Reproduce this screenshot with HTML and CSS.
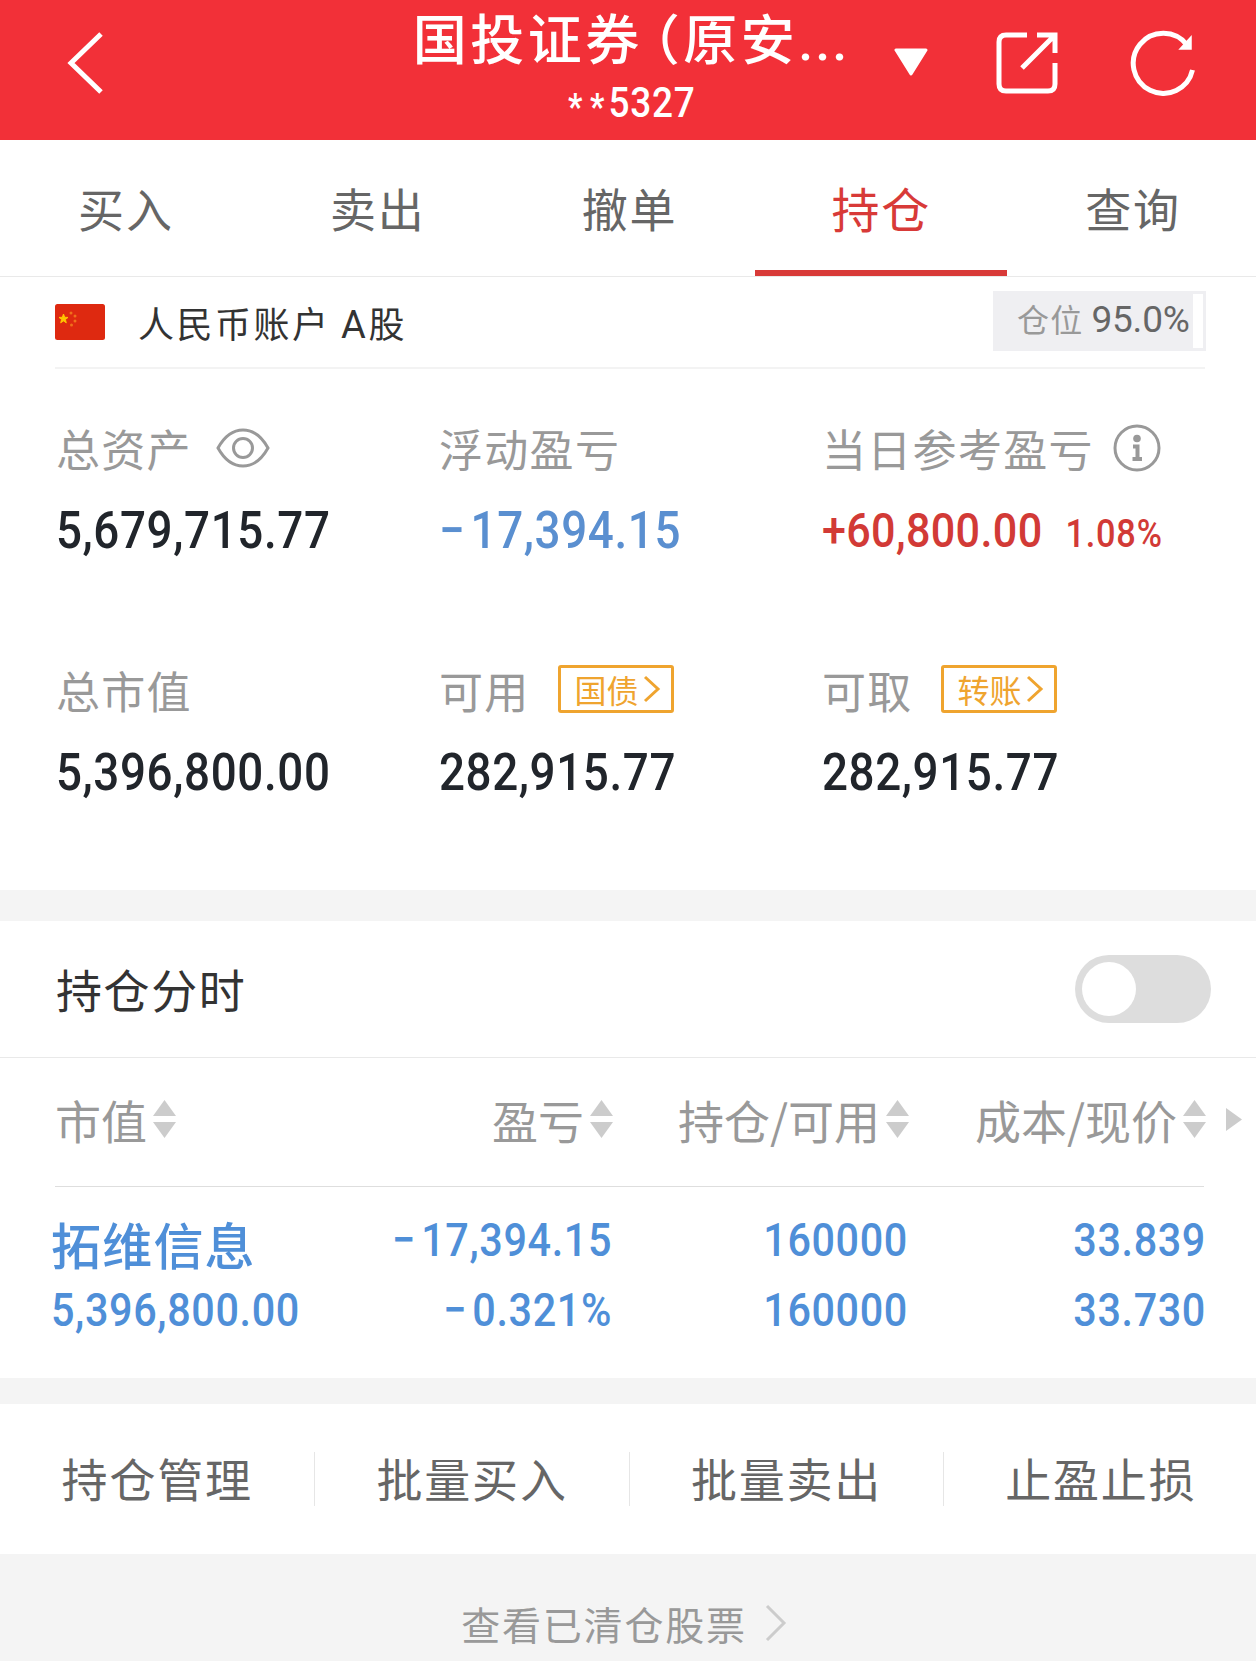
FILE: index.html
```html
<!DOCTYPE html>
<html lang="zh-CN">
<head>
  <meta charset="UTF-8" />
  <meta name="viewport" content="width=device-width, initial-scale=1.0" />
  <title>持仓</title>
  <link rel="stylesheet" href="styles.css">
</head>
<body>

  <header class="header">
    <svg class="back" width="40" height="68" viewBox="0 0 40 68"><path d="M37 5 L7 34 L37 63" fill="none" stroke="#fff" stroke-width="5"/></svg>
    <div class="broker">
      <div class="broker-name">国投证券<span class="paren">（</span>原安<span class="dots">...</span></div>
      <div class="broker-no"><span class="star">*</span><span class="star">*</span>5327</div>
    </div>
    <svg class="caret" width="34" height="28" viewBox="0 0 34 28"><path d="M2 2 H32 L17 26 Z" fill="#fff" stroke="#fff" stroke-width="3" stroke-linejoin="round"/></svg>
    <svg class="share" width="62" height="62" viewBox="0 0 62 62" fill="none" stroke="#fff" stroke-width="5">
      <path d="M31 3 H10 Q3 3 3 10 V52 Q3 59 10 59 H52 Q59 59 59 52 V31"/>
      <path d="M41 3 H59 V21 M59 3 L26 36"/>
    </svg>
    <svg class="refresh" width="66" height="66" viewBox="0 0 66 66">
      <path d="M62.500 40 A30 30 0 1 1 57 15" fill="none" stroke="#fff" stroke-width="5"/>
      <path d="M61 7 V19 H50 Z" fill="#fff" stroke="#fff" stroke-width="1.500"/>
    </svg>
  </header>

  <nav class="tabs">
    <div class="tab">买入</div>
    <div class="tab">卖出</div>
    <div class="tab">撤单</div>
    <div class="tab active">持仓</div>
    <div class="tab">查询</div>
  </nav>

  <section class="account">
    <div class="account-bar">
      <svg class="flag" width="50" height="36" viewBox="0 0 50 36">
        <rect width="50" height="36" rx="2.500" fill="#de2910"/>
        <path d="M8.500 10 L9.700 13.300 L13 13.400 L10.400 15.500 L11.300 18.800 L8.500 16.900 L5.700 18.800 L6.600 15.500 L4 13.400 L7.300 13.300 Z" fill="#ffc400" stroke="#ffc400"/>
        <g fill="#f0701c"><circle cx="16" cy="9" r="1.500"/><circle cx="20" cy="12" r="1.500"/><circle cx="20" cy="17" r="1.500"/><circle cx="16.500" cy="21" r="1.500"/></g>
      </svg>
      <div class="account-name">人民币账户 <span class="latin">A</span>股</div>
      <div class="position"><div class="position-fill">仓位<span class="percent-full">95.0%</span></div></div>
    </div>

    <div class="metrics">
      <div class="metric">
        <div class="label">总资产
          <svg class="eye" width="54" height="40" viewBox="0 0 54 40" fill="none" stroke="#999" stroke-width="3"><path d="M2 20 Q12 2 27 2 Q42 2 52 20 Q42 38 27 38 Q12 38 2 20 Z"/><circle cx="27" cy="20" r="9.500"/></svg>
        </div>
        <div class="value num">5,679,715.77</div>
      </div>
      <div class="metric">
        <div class="label">浮动盈亏</div>
        <div class="value num blue"><span class="minus">−</span>17,394.15</div>
      </div>
      <div class="metric">
        <div class="label">当日参考盈亏
          <svg class="info" width="48" height="48" viewBox="0 0 48 48"><circle cx="24" cy="24" r="22" fill="none" stroke="#999" stroke-width="3"/><circle cx="24" cy="14.500" r="3.800" fill="#999"/><path d="M20 22.500 H24.500 V36 M19.500 35 H29" fill="none" stroke="#999" stroke-width="4"/></svg>
        </div>
        <div class="value num red">+60,800.00<span class="percent">1.08%</span></div>
      </div>
      <div class="metric">
        <div class="label">总市值</div>
        <div class="value num">5,396,800.00</div>
      </div>
      <div class="metric">
        <div class="label">可用
          <span class="tag">国债<svg width="18" height="28" viewBox="0 0 18 28"><path d="M2 2 L15 14 L2 26" fill="none" stroke="#efa42f" stroke-width="3"/></svg></span>
        </div>
        <div class="value num">282,915.77</div>
      </div>
      <div class="metric">
        <div class="label">可取
          <span class="tag">转账<svg width="18" height="28" viewBox="0 0 18 28"><path d="M2 2 L15 14 L2 26" fill="none" stroke="#efa42f" stroke-width="3"/></svg></span>
        </div>
        <div class="value num">282,915.77</div>
      </div>
    </div>
  </section>

  <section class="chart-switch">
    <div class="switch-title">持仓分时</div>
    <div class="switch"><div class="knob"></div></div>
  </section>

  <section class="holdings">
    <div class="row head">
      <div class="cell">市值<svg class="sort" width="23" height="38" viewBox="0 0 23 38"><path d="M11.500 0 L23 16 H0 Z M0 22 H23 L11.500 38 Z" fill="#ccc"/></svg></div>
      <div class="cell">盈亏<svg class="sort" width="23" height="38" viewBox="0 0 23 38"><path d="M11.500 0 L23 16 H0 Z M0 22 H23 L11.500 38 Z" fill="#ccc"/></svg></div>
      <div class="cell">持仓/可用<svg class="sort" width="23" height="38" viewBox="0 0 23 38"><path d="M11.500 0 L23 16 H0 Z M0 22 H23 L11.500 38 Z" fill="#ccc"/></svg></div>
      <div class="cell">成本/现价<svg class="sort" width="23" height="38" viewBox="0 0 23 38"><path d="M11.500 0 L23 16 H0 Z M0 22 H23 L11.500 38 Z" fill="#ccc"/></svg></div>
      <svg class="more" width="16" height="23" viewBox="0 0 16 23"><path d="M0 0 L16 11.500 L0 23 Z" fill="#ccc"/></svg>
    </div>
    <div class="divider"></div>
    <div class="row stock">
      <div class="cell"><div class="stock-name">拓维信息</div><div class="num">5,396,800.00</div></div>
      <div class="cell"><div class="num"><span class="minus">−</span>17,394.15</div><div class="num"><span class="minus">−</span>0.321%</div></div>
      <div class="cell"><div class="num">160000</div><div class="num">160000</div></div>
      <div class="cell"><div class="num">33.839</div><div class="num">33.730</div></div>
    </div>
  </section>

  <section class="actions">
    <div class="action">持仓管理</div>
    <div class="action">批量买入</div>
    <div class="action">批量卖出</div>
    <div class="action">止盈止损</div>
  </section>

  <footer class="cleared">查看已清仓股票<svg width="22" height="38" viewBox="0 0 22 38"><path d="M2 2 L19 19 L2 36" fill="none" stroke="#ccc" stroke-width="3"/></svg></footer>

</body>
</html>
```
FILE: styles.css
```css
* {
  box-sizing: border-box;
}

body {
  margin: 0;
  background-color: #f4f4f4;
  color: #333;
  font-family: "Noto Sans CJK SC", sans-serif;
  white-space: nowrap;
}

svg {
  flex: none;
  display: block;
}

/* narrow digits */
.num {
  font-family: Roboto, "Noto Sans CJK SC", sans-serif;
  font-weight: 500;
  letter-spacing: 0.7px;
  transform: scaleX(0.88);
  transform-origin: left center;
}

.minus { margin-right: 6px; }

/* header */
.header {
  display: flex;
  height: 140px;
  padding-left: 64px;
  background-color: #f23038;
  color: #fff;
}

.back { margin-top: 29px; }

.broker {
  width: 470px;
  margin-left: 291px;
  text-align: center;
}

.broker-name {
  height: 76px;
  padding-left: 2px;
  font-size: 54px;
  font-weight: 500;
  line-height: 74px;
  letter-spacing: 3.5px;
}

.paren {
  margin-left: 10px;
  font-feature-settings: "halt";
}

.dots {
  font-family: Roboto, sans-serif;
  letter-spacing: 2px;
}

.broker-no {
  font-family: Roboto, sans-serif;
  font-size: 42px;
  font-weight: 500;
  line-height: 54px;
  letter-spacing: 0.8px;
  transform: scaleX(0.88);
}

.star {
  display: inline-block;
  width: 25px;
  font-size: 36px;
  font-weight: 700;
  line-height: 40px;
  vertical-align: -2px;
}

.caret { margin: 48px 0 0 29px; }
.share { margin: 32px 0 0 68px; }
.refresh { margin: 30px 0 0 72px; }

/* tabs */
.tabs {
  display: flex;
  height: 137px;
  background-color: #fff;
  border-bottom: 1px solid #e9e9e9;
  overflow: hidden;
}

.tab {
  flex: 0 0 251.8px;
  color: #666;
  font-size: 46px;
  line-height: 134px;
  letter-spacing: 1.8px;
  text-align: center;
}

.tab.active {
  color: #d83a38;
  font-size: 48px;
  border-bottom: 6px solid #d83a38;
}

/* account */
.account {
  height: 613px;
  padding: 0 51px 0 55px;
  background-color: #fff;
}

.account-bar {
  display: flex;
  align-items: center;
  height: 92px;
  border-bottom: 2px solid #f3f3f3;
}

.account-name {
  flex: 1;
  margin-left: 33px;
  font-size: 36px;
  letter-spacing: 2.5px;
}

.latin {
  font-family: Roboto, sans-serif;
  font-size: 38px;
}

.position {
  width: 213px;
  height: 60px;
  padding-right: 10px;
  border: 3px solid #efeff2;
  margin: 0 -1px 2px 0;
}

.position-fill {
  height: 54px;
  padding-left: 21px;
  background-color: #efeff2;
  color: #999;
  font-size: 32px;
  line-height: 49px;
  letter-spacing: 1.2px;
}

.percent-full {
  margin-left: 8px;
  color: #666;
  font-family: Roboto, sans-serif;
  font-size: 37px;
  letter-spacing: -0.2px;
}

.metrics {
  display: grid;
  grid-template-columns: repeat(3, 383px);
  grid-auto-rows: 242px;
  padding-top: 47px;
}

.label {
  display: flex;
  align-items: center;
  height: 64px;
  padding-left: 1px;
  color: #999;
  font-size: 44px;
  line-height: 60px;
  letter-spacing: 1.3px;
}

.value {
  padding-left: 1px;
  margin-top: 16px;
  color: #21252b;
  font-size: 52px;
  line-height: 70px;
}

.value.blue { color: #5a8fd0; }

.value.red {
  color: #d23a36;
  font-size: 49px;
  letter-spacing: 0.4px;
}

.percent {
  margin-left: 26px;
  font-size: 39px;
  letter-spacing: 0.9px;
}

.eye { margin-left: 24px; }
.info { margin-left: 19px; }

.tag {
  display: flex;
  align-items: center;
  height: 48px;
  padding: 0 10px 0 14px;
  margin: 0 0 2px 28px;
  border: 3px solid #efa42f;
  border-radius: 3px;
  color: #efa42f;
  font-size: 32px;
  line-height: 40px;
  letter-spacing: 0;
}

.tag svg { margin-left: 4px; }

/* switch */
.chart-switch {
  display: flex;
  align-items: center;
  justify-content: space-between;
  height: 137px;
  padding: 0 45px 0 56px;
  margin-top: 31px;
  background-color: #fff;
  border-bottom: 1px solid #e9e9e9;
}

.switch-title {
  padding-bottom: 2px;
  font-size: 46px;
  letter-spacing: 1.6px;
}

.switch {
  width: 136px;
  height: 68px;
  padding: 7px;
  border-radius: 34px;
  background-color: #ddd;
}

.knob {
  width: 54px;
  height: 54px;
  border-radius: 50%;
  background-color: #fff;
}

/* holdings */
.holdings {
  height: 320px;
  background-color: #fff;
}

.row {
  display: grid;
  grid-template-columns: 240px 318px 296px 297px auto;
  padding-left: 55px;
}

.head {
  align-items: center;
  height: 128px;
  padding-bottom: 6px;
  color: #999;
  font-size: 46px;
}

.head .cell {
  display: flex;
  align-items: center;
  justify-content: flex-end;
}

.head .cell:first-child { justify-content: flex-start; }

.sort { margin-left: 6px; }
.more { margin-left: 20px; }

.divider {
  height: 1px;
  margin: 0 52px 0 55px;
  background-color: #dedede;
}

.stock {
  padding: 18px 0 0 51px;
  grid-template-columns: 243px 318px 296px 298px;
  color: #4f8fd8;
  font-size: 47px;
  line-height: 70px;
  text-align: right;
}

.stock .num { transform-origin: right center; }

.stock .cell:first-child { text-align: left; }

.stock .cell:first-child .num { transform-origin: left center; }

.stock-name {
  height: 70px;
  font-size: 50px;
  font-weight: 500;
  line-height: 77px;
  letter-spacing: 1.2px;
}

/* actions */
.actions {
  display: flex;
  align-items: center;
  height: 150px;
  margin-top: 26px;
  background-color: #fff;
}

.action {
  flex: 0 0 314.4px;
  height: 54px;
  color: #666;
  font-size: 46px;
  line-height: 51px;
  letter-spacing: 1.8px;
  text-align: center;
}

.action + .action { border-left: 1px solid #e6e6e6; }

.cleared {
  display: flex;
  align-items: center;
  justify-content: center;
  height: 107px;
  padding: 30px 8px 0 0;
  color: #999;
  font-size: 39px;
  line-height: 60px;
  letter-spacing: 1.8px;
}

.cleared svg { margin-left: 18px; }
```
